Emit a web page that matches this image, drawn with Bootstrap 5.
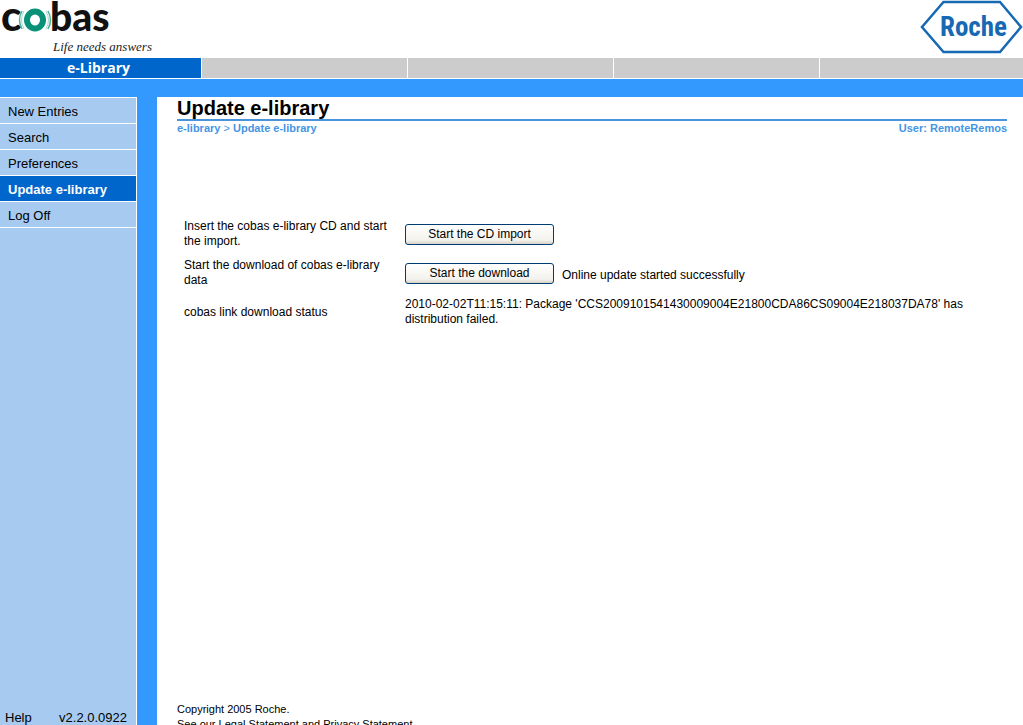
<!DOCTYPE html>
<html lang="en">
<head>
<meta charset="utf-8">
<meta name="viewport" content="width=device-width, initial-scale=1">
<title>Update e-library</title>
<link href="https://cdn.jsdelivr.net/npm/bootstrap@5.3.0/dist/css/bootstrap.min.css" rel="stylesheet">
<style>
body{font-family:"Liberation Sans",Arial,sans-serif;font-size:12px;line-height:15px;color:#000}
a{color:inherit;text-decoration:none}
.brand-bar{height:58px}
.tabs{display:grid;grid-template-columns:202px repeat(3,206px) 1fr;grid-template-rows:21px}
.tabs>*{background:#ccc;border-right:1px solid #fff;border-bottom:1px solid #fff}
.tabs>:last-child{border-right:0}
.tabs a{background:#06c;color:#fff;font:bold 14px/20px "Open Sans",sans-serif;padding-right:4px}
.frame{background:#39f;padding-top:18px}
.side{width:137px;background:#a6caf0;border-right:1px solid #fff;border-top:1px solid #fff;font-size:13px}
.side .nav-link{height:26px;padding:0 8px;line-height:27px;color:#000;border-bottom:1px solid #fff}
.side .nav-link.active{background:#06c;color:#fff;font-weight:bold}
.side-foot{padding:0 9px 0 5px;font-size:13px;line-height:15px}
.content-pane{margin-left:20px;padding:0 16px 0 20px}
h1{font-size:20px;line-height:22px;font-weight:bold;border-bottom:2px solid #4a94dc}
.crumbs{font-size:11px;line-height:14px;color:#4595e5;font-weight:bold}
.actions{margin-top:84px}
.actions td{padding:0 0 9px 7px;vertical-align:middle}
.actions td:first-child{width:228px;padding-right:8px}
.actions td+td{padding-left:0}
.xp{width:149px;height:21px;padding:0;font-size:12px;line-height:17px;color:#000;border:1px solid #003c74;border-radius:3px;background:linear-gradient(#fff,#f3f2ed 80%,#d8d2c8)}
.xp:hover{color:#000;border-color:#003c74;background:#f6f5f0}
.foot{height:23px;font-size:11px}
</style>
</head>
<body class="bg-white">
<div class="vh-100 overflow-hidden d-flex flex-column">
<header class="brand-bar d-flex justify-content-between flex-shrink-0">
<svg width="160" height="58" overflow="visible" role="img" aria-label="cobas, Life needs answers">
<g font-family="Lato, sans-serif" font-weight="900" fill="#111">
<text x="1" y="31" font-size="42">c</text><text x="50" y="31" font-size="39">bas</text></g>
<ellipse cx="35" cy="20" rx="8" ry="8.500" fill="none" stroke="#079178" stroke-width="6"/>
<path d="M22 11q-5 9 0 18M48 11q5 9 0 18" fill="none" stroke="#4db39f" stroke-width="1.500"/>
<path d="M24 11q-5 9 0 18M46 11q5 9 0 18" fill="none" stroke="#a5d9cc"/>
<text x="53" y="51" font-family="Liberation Serif, serif" font-style="italic" font-size="13" fill="#222">Life needs answers</text>
</svg>
<svg width="103" height="58" role="img" aria-label="Roche">
<path d="M23.500 2H80L101 27 80 52H23.500L2 27Z" fill="#fff" stroke="#1769b3" stroke-width="2.500"/>
<text x="20" y="36" font-family="Roboto Condensed, Roboto, sans-serif" font-weight="700" font-size="27" fill="#1769b3">Roche</text>
</svg>
</header>
<nav class="tabs flex-shrink-0" aria-label="Sections"><a href="#" class="text-center">e-Library</a><div></div><div></div><div></div><div></div></nav>
<div class="frame d-flex flex-grow-1">
<aside class="side d-flex flex-column flex-shrink-0">
<nav class="nav flex-column" aria-label="Library">
<a class="nav-link" href="#">New Entries</a>
<a class="nav-link" href="#">Search</a>
<a class="nav-link" href="#">Preferences</a>
<a class="nav-link active" href="#" aria-current="page">Update e-library</a>
<a class="nav-link" href="#">Log Off</a>
</nav>
<div class="side-foot mt-auto d-flex justify-content-between"><a href="#">Help</a><span>v2.2.0.0922</span></div>
</aside>
<main class="content-pane bg-white flex-grow-1 d-flex flex-column">
<h1 class="m-0">Update e-library</h1>
<div class="crumbs d-flex justify-content-between"><div><a href="#">e-library</a> <span class="fw-normal">&gt;</span> <a href="#">Update e-library</a></div><div>User: RemoteRemos</div></div>
<table class="actions">
<tr><td>Insert the cobas e-library CD and start the import.</td><td><button type="button" class="btn xp">Start the CD import</button></td></tr>
<tr><td>Start the download of cobas e-library data</td><td><div class="d-flex align-items-center"><button type="button" class="btn xp me-2">Start the download</button><span class="pt-1">Online update started successfully</span></div></td></tr>
<tr><td>cobas link download status</td><td>2010-02-02T11:15:11: Package 'CCS2009101541430009004E21800CDA86CS09004E218037DA78' has distribution failed.</td></tr>
</table>
<footer class="foot mt-auto">Copyright 2005 Roche.<br>See our <a href="#">Legal Statement</a> and <a href="#">Privacy Statement</a>.</footer>
</main>
</div>
</div>
<script src="https://cdn.jsdelivr.net/npm/bootstrap@5.3.0/dist/js/bootstrap.bundle.min.js"></script>
</body>
</html>
